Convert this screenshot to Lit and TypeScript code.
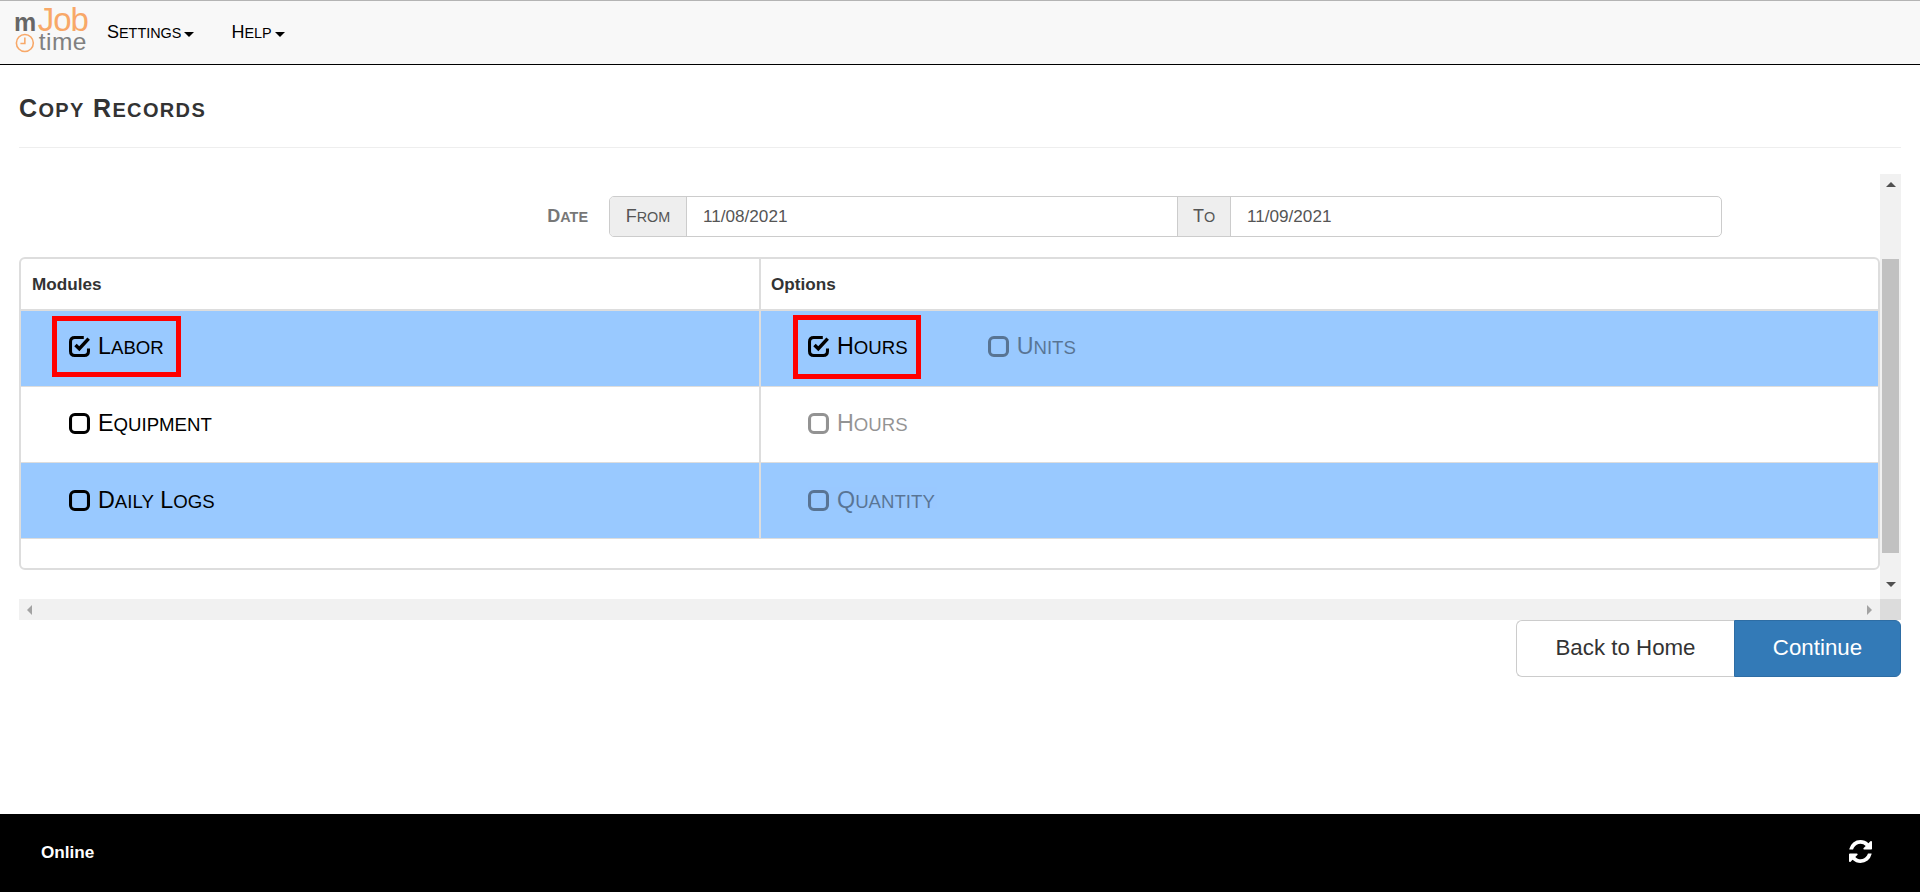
import { LitElement, html, css, svg } from "lit";
import { customElement } from "lit/decorators.js";

const squareO = svg`<rect x="1.6" y="1.6" width="18.8" height="18.8" rx="4.5"/>`;
const checkO = svg`<path d="M15.5 1.6H6.1Q1.6 1.6 1.6 6.1V15.9Q1.6 20.4 6.1 20.4H15.9Q20.4 20.4 20.4 15.9V13"/><path class="tick" d="M6.8 9.4L10.8 13.4L20.6 2.8"/>`;
const refresh = svg`<path d="M1639 1056q0 5-1 7-64 268-268 434.5t-478 166.5q-146 0-282.5-55t-243.5-157l-129 129q-19 19-45 19t-45-19-19-45v-448q0-26 19-45t45-19h448q26 0 45 19t19 45-19 45l-137 137q71 66 161 102t187 36q134 0 250-65t186-179q11-17 53-117 8-23 30-23h192q13 0 22.5 9.5t9.5 22.5zm25-800v448q0 26-19 45t-45 19h-448q-26 0-45-19t-19-45 19-45l138-138q-148-137-349-137-134 0-250 65t-186 179q-11 17-53 117-8 23-30 23h-199q-13 0-22.5-9.5t-9.5-22.5v-7q65-268 270-434.5t480-166.5q146 0 284 55.5t245 156.5l130-129q19-19 45-19t45 19 19 45z"/>`;

const box = (checked: boolean) => html`<svg class="cb" viewBox="0 0 22 22">${checked ? checkO : squareO}</svg>`;

/* Small caps at the 0.8 ratio of the reference: each word keeps its real text. */
const sc = (text: string) => {
  const words = text.split(" ");
  return words.map((w, i) => html`<span class="w">${w}</span>${i < words.length - 1 ? " " : ""}`);
};

const item = (label: string, checked: boolean, cls = "") =>
  html`<span class="item ${cls}">${box(checked)}<span class="lbl">${sc(label)}</span></span>`;

@customElement("app-root")
export class AppRoot extends LitElement {
  static styles = css`
    :host { display: flex; flex-direction: column; height: 892px; overflow: hidden; font-family: "Liberation Sans", Arial, sans-serif; font-size: 17.14px; color: #333; background: #fff; }
    .w { display: inline-block; text-transform: uppercase; font-size: 0.8em; }
    .w::first-letter { font-size: 1.25em; }
    .nav { display: flex; align-items: center; height: 65px; box-sizing: border-box; flex: none; background: #f8f8f8; border-top: 1px solid #b4b4b4; border-bottom: 1px solid #000; }
    .logo { display: flex; flex-direction: column; width: 73px; margin: 0 0 4px 14px; height: 47px; line-height: 1; }
    .logo-top { display: flex; align-items: baseline; height: 26px; }
    .logo-m { font-weight: bold; font-size: 25px; color: #666; letter-spacing: -0.6px; }
    .logo-job { font-size: 33px; color: #f8a868; margin-left: 2px; letter-spacing: -1px; line-height: 26px; }
    .logo-bottom { display: flex; align-items: center; gap: 4px; height: 21px; margin-top: -1px; }
    .clock { width: 20px; height: 20px; margin-left: 1px; }
    .logo-time { font-size: 24.5px; color: #808080; letter-spacing: 0.5px; }
    .menu { display: flex; align-items: center; font-size: 18px; color: #000; }
    .menu.settings { margin-left: 20px; }
    .menu.help { margin-left: 37px; }
    .caret { width: 0; height: 0; margin-left: 3px; margin-top: 3px; border-top: 5px solid #000; border-left: 5px solid transparent; border-right: 5px solid transparent; }
    main { flex: 1; display: flex; flex-direction: column; padding: 0 19px 0 19px; min-height: 0; }
    h1 { margin: 0; height: 83px; box-sizing: border-box; padding: 28px 0 0 0; font-size: 25px; line-height: 30px; font-weight: bold; letter-spacing: 1.35px; color: #333; border-bottom: 1px solid #eee; }
    .scroller { display: grid; grid-template-columns: 1861px 21px; grid-template-rows: 425px 21px; margin-top: 26px; }
    .content { display: flex; flex-direction: column; gap: 20px; padding-top: 22px; box-sizing: border-box; }
    .date-row { display: flex; justify-content: flex-end; align-items: center; padding-right: 158px; height: 41px; }
    .date-label { font-size: 18px; font-weight: bold; color: #777; margin-right: 21px; }
    .group { display: flex; width: 1113px; height: 41px; box-sizing: border-box; border: 1px solid #ccc; border-radius: 5px; color: #555; overflow: hidden; }
    .addon { display: flex; align-items: center; justify-content: center; background: #eee; font-size: 18px; flex: none; border-right: 1px solid #ccc; box-sizing: border-box; }
    .addon.from { width: 77px; }
    .addon.to { width: 54px; border-left: 1px solid #ccc; }
    .field { flex: 1; display: flex; align-items: center; padding-left: 16px; }
    .tbl { border: 2px solid #ddd; border-radius: 6px; height: 313px; box-sizing: border-box; width: 1861px; overflow: hidden; }
    .row { display: grid; grid-template-columns: 738px 2px 1fr; height: 75px; border-bottom: 1px solid #ddd; box-sizing: content-box; }
    .row.head { height: 50px; border-bottom: 2px solid #ddd; font-weight: bold; color: #333; }
    .row.blue .cell { background: #99c9ff; }
    .sep { background: #ddd; }
    .cell { display: flex; align-items: center; box-sizing: border-box; }
    .head .cell { padding: 0 0 0 10px; }
    .head .cell:first-child { padding-left: 11px; }
    .mod { padding: 0 0 4px 31px; }
    .opt { padding: 0 0 4px 32px; }
    .row.second .cell { padding-bottom: 2px; }
    .row.third .cell { padding-bottom: 0; }
    .item { display: inline-flex; align-items: center; gap: 8px; box-sizing: border-box; height: 61px; padding: 0 12px 0 12px; border: 5px solid transparent; font-size: 23.3px; color: #000; }
    .opt .item { height: 64px; padding: 0 8px 0 10px; }
    .item.marked { border-color: #f00; }
    .item.off { opacity: 0.42; }
    .opt .item.units { margin-left: 52px; }
    .cb { width: 21px; height: 21px; fill: none; stroke: currentColor; stroke-width: 3.2; flex: none; }
    .cb .tick { stroke-width: 3.6; }
    .vbar { background: #f1f1f1; display: flex; flex-direction: column; align-items: center; }
    .vbar .up { margin-top: 8px; border-bottom: 5px solid #505050; border-left: 5px solid transparent; border-right: 5px solid transparent; }
    .vbar .thumb { width: 17px; height: 294px; margin-top: 72px; background: #c1c1c1; }
    .vbar .down { margin-top: 29px; border-top: 5px solid #505050; border-left: 5px solid transparent; border-right: 5px solid transparent; }
    .hbar { background: #f1f1f1; display: flex; align-items: center; justify-content: space-between; padding: 0 8px; box-sizing: border-box; }
    .hbar .l { border-right: 5px solid #a3a3a3; border-top: 5px solid transparent; border-bottom: 5px solid transparent; }
    .hbar .r { border-left: 5px solid #a3a3a3; border-top: 5px solid transparent; border-bottom: 5px solid transparent; }
    .corner { background: #dcdcdc; }
    .actions { display: flex; justify-content: flex-end; }
    .btn { display: flex; align-items: center; justify-content: center; height: 57px; box-sizing: border-box; padding-bottom: 2px; font-size: 22.3px; border: 1px solid #ccc; }
    .btn.back { width: 218px; background: #fff; color: #333; border-right: 0; border-radius: 6px 0 0 6px; }
    .btn.go { width: 167px; background: #337ab7; color: #fff; border-color: #2e6da4; border-radius: 0 6px 6px 0; }
    footer { flex: none; height: 78px; box-sizing: border-box; padding: 0 48px 3px 41px; background: #000; color: #fff; display: flex; align-items: center; justify-content: space-between; font-weight: bold; }
    .status { margin-top: 2px; }
    .sync { width: 23px; height: 23px; fill: #fff; }
  `;

  render() {
    return html`
      <div class="nav">
        <div class="logo">
          <div class="logo-top"><span class="logo-m">m</span><span class="logo-job">Job</span></div>
          <div class="logo-bottom">
            <svg class="clock" viewBox="0 0 20 20" fill="none" stroke="#f8a868" stroke-width="1.6"><circle cx="10" cy="10" r="8.6"/><path d="M10 4.5V10.5H5.5"/></svg>
            <span class="logo-time">time</span>
          </div>
        </div>
        <div class="menu settings">${sc("Settings")}<span class="caret"></span></div>
        <div class="menu help">${sc("Help")}<span class="caret"></span></div>
      </div>
      <main>
        <h1>${sc("Copy Records")}</h1>
        <div class="scroller">
          <div class="content">
            <div class="date-row">
              <span class="date-label">${sc("Date")}</span>
              <div class="group">
                <span class="addon from">${sc("From")}</span>
                <span class="field">11/08/2021</span>
                <span class="addon to">${sc("To")}</span>
                <span class="field">11/09/2021</span>
              </div>
            </div>
            <div class="tbl">
              <div class="row head"><div class="cell">Modules</div><div class="sep"></div><div class="cell">Options</div></div>
              <div class="row blue">
                <div class="cell mod">${item("Labor", true, "marked")}</div><div class="sep"></div>
                <div class="cell opt">${item("Hours", true, "marked")}${item("Units", false, "off units")}</div>
              </div>
              <div class="row second">
                <div class="cell mod">${item("Equipment", false)}</div><div class="sep"></div>
                <div class="cell opt">${item("Hours", false, "off")}</div>
              </div>
              <div class="row blue third">
                <div class="cell mod">${item("Daily Logs", false)}</div><div class="sep"></div>
                <div class="cell opt">${item("Quantity", false, "off")}</div>
              </div>
            </div>
          </div>
          <div class="vbar"><span class="up"></span><span class="thumb"></span><span class="down"></span></div>
          <div class="hbar"><span class="l"></span><span class="r"></span></div>
          <div class="corner"></div>
        </div>
        <div class="actions">
          <div class="btn back">Back to Home</div>
          <div class="btn go">Continue</div>
        </div>
      </main>
      <footer>
        <span class="status">Online</span>
        <svg class="sync" viewBox="128 128 1536 1536">${refresh}</svg>
      </footer>
    `;
  }
}
